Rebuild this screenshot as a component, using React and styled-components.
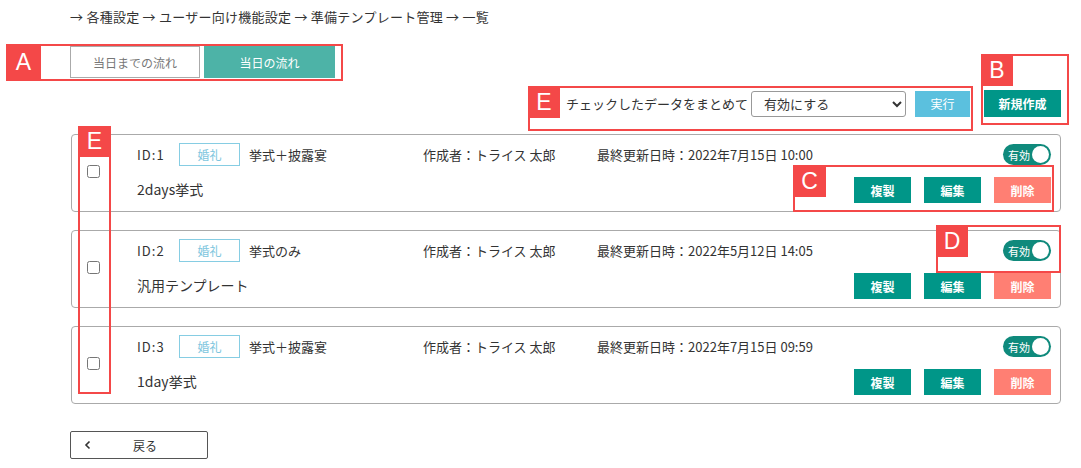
import React from "react";
import styled, { createGlobalStyle } from "styled-components";

const Global = createGlobalStyle`
  html, body { margin: 0; padding: 0; background: #fff; }
  body { font-family: "Noto Sans CJK JP", "Noto Sans", sans-serif; color: #333; }
  * { box-sizing: border-box; }
`;

const Page = styled.div`
  position: relative;
  width: 1081px;
  height: 468px;
  padding: 8px 20px 0 70px;
`;

const Breadcrumb = styled.div`
  font-size: 13px;
  line-height: 18px;
  letter-spacing: 0.25px;
  color: #333;
  white-space: nowrap;
`;

const Tabs = styled.div`
  display: flex;
  gap: 4px;
  margin-top: 20px;
`;

const Tab = styled.div`
  width: ${(p) => (p.$active ? 131 : 130)}px;
  height: 32px;
  display: flex;
  align-items: center;
  justify-content: center;
  font-size: 12px;
  color: ${(p) => (p.$active ? "#fff" : "#777")};
  background: ${(p) => (p.$active ? "#4db3a7" : "#fff")};
  border: 1px solid ${(p) => (p.$active ? "#4db3a7" : "#aaa")};
`;

const Toolbar = styled.div`
  display: flex;
  justify-content: flex-end;
  align-items: center;
  margin-top: 12px;
  height: 27px;
`;

const ToolLabel = styled.span`
  font-size: 13px;
  color: #333;
  margin-right: 3px;
`;

const Select = styled.select`
  width: 155px;
  height: 26px;
  font-family: inherit;
  font-size: 13px;
  color: #333;
  border: 1px solid #999;
  border-radius: 3px;
  padding: 0 6px 0 8px;
  background: #fff;
`;

const Btn = styled.button`
  width: ${(p) => p.$w || 57}px;
  height: ${(p) => p.$h || 26}px;
  margin-left: ${(p) => p.$ml || 0}px;
  border: none;
  border-radius: 0;
  font-family: inherit;
  font-size: 12px;
  font-weight: ${(p) => (p.$bold ? 700 : 400)};
  color: #fff;
  background: ${(p) => p.$bg};
  padding: 0;
  display: flex;
  align-items: center;
  justify-content: center;
`;

const CardList = styled.div`
  display: flex;
  flex-direction: column;
  gap: 18px;
  margin-top: 17px;
  margin-left: 1px;
  width: 990px;
`;

const Card = styled.div`
  display: flex;
  height: 78px;
  border: 1px solid #aaa;
  border-radius: 4px;
  padding: 8px 8px 8px 0;
`;

const CheckCol = styled.div`
  width: 65px;
  display: flex;
  align-items: center;
  padding-left: 15px;
  padding-bottom: 3px;
`;

const Check = styled.input`
  width: 13px;
  height: 13px;
  margin: 0;
`;

const Body = styled.div`
  flex: 1;
  display: flex;
  flex-direction: column;
  gap: 11px;
`;

const MetaRow = styled.div`
  display: flex;
  align-items: center;
  height: 23px;
  font-size: 13px;
  color: #333;
`;

const Cell = styled.span`
  width: ${(p) => p.$w}px;
  letter-spacing: ${(p) => p.$ls || 0}px;
  white-space: nowrap;
  flex-shrink: 0;
`;

const Tag = styled.span`
  width: 61px;
  height: 23px;
  margin-right: 9px;
  border: 1px solid #86cde3;
  color: #7ec6de;
  font-size: 12px;
  display: flex;
  align-items: center;
  justify-content: center;
  flex-shrink: 0;
`;

const Spacer = styled.div`
  flex: 1;
`;

const Toggle = styled.div`
  width: 48px;
  height: 21px;
  border-radius: 11px;
  background: #0f8a7c;
  display: flex;
  align-items: center;
  justify-content: space-between;
  padding: 0 2px 0 5px;
  margin-right: 1px;
  color: #fff;
  font-size: 11px;
`;

const Knob = styled.span`
  width: 17px;
  height: 17px;
  border-radius: 50%;
  background: #fff;
`;

const TitleRow = styled.div`
  display: flex;
  align-items: center;
  height: 26px;
`;

const Title = styled.div`
  flex: 1;
  font-size: 14px;
  color: #333;
  padding-bottom: 2px;
`;

const Actions = styled.div`
  display: flex;
  gap: 13px;
  margin-right: 1px;
`;

const Back = styled.button`
  margin-top: 27px;
  width: 138px;
  height: 28px;
  border: 1px solid #555;
  border-radius: 2px;
  background: #fff;
  display: grid;
  grid-template-columns: 1fr auto 1fr;
  align-items: center;
  padding: 0 0 0 12px;
  font-family: inherit;
  font-size: 12px;
  color: #333;
`;

const Chev = styled.svg`
  width: 10px;
  height: 10px;
`;

const Mark = styled.div`
  position: absolute;
  border: 2px solid #f44848;
  pointer-events: none;
`;

const MarkLabel = styled.span`
  position: absolute;
  left: -2px;
  top: -2px;
  width: ${(p) => p.$w}px;
  height: ${(p) => p.$h}px;
  background: #f44848;
  color: #fff;
  font-family: "Liberation Sans", Arial, sans-serif;
  font-size: 23px;
  display: flex;
  align-items: center;
  justify-content: center;
`;

const Annotation = ({ x, y, w, h, label, lw = 32, lh = 32 }) => (
  <Mark style={{ left: x, top: y, width: w, height: h }}>
    <MarkLabel $w={lw} $h={lh}>{label}</MarkLabel>
  </Mark>
);

const items = [
  { id: 1, cat: "挙式＋披露宴", date: "2022年7月15日 10:00", title: "2days挙式" },
  { id: 2, cat: "挙式のみ", date: "2022年5月12日 14:05", title: "汎用テンプレート" },
  { id: 3, cat: "挙式＋披露宴", date: "2022年7月15日 09:59", title: "1day挙式" },
];

export default function App() {
  return (
    <>
      <Global />
      <Page>
        <Breadcrumb>→ 各種設定 → ユーザー向け機能設定 → 準備テンプレート管理 → 一覧</Breadcrumb>
        <Tabs>
          <Tab>当日までの流れ</Tab>
          <Tab $active>当日の流れ</Tab>
        </Tabs>
        <Toolbar>
          <ToolLabel>チェックしたデータをまとめて</ToolLabel>
          <Select defaultValue="on">
            <option value="on">有効にする</option>
            <option value="off">無効にする</option>
          </Select>
          <Btn $w={55} $ml={9} $bg="#5bc0de">実行</Btn>
          <Btn $w={77} $h={27} $ml={14} $bg="#009688" $bold>新規作成</Btn>
        </Toolbar>
        <CardList>
          {items.map((it) => (
            <Card key={it.id}>
              <CheckCol>
                <Check type="checkbox" />
              </CheckCol>
              <Body>
                <MetaRow>
                  <Cell $w={42} $ls={1}>ID:{it.id}</Cell>
                  <Tag>婚礼</Tag>
                  <Cell $w={174}>{it.cat}</Cell>
                  <Cell $w={174}>作成者：トライス 太郎</Cell>
                  <Cell $w={300}>最終更新日時：{it.date}</Cell>
                  <Spacer />
                  <Toggle>
                    有効
                    <Knob />
                  </Toggle>
                </MetaRow>
                <TitleRow>
                  <Title>{it.title}</Title>
                  <Actions>
                    <Btn $bg="#009688" $bold>複製</Btn>
                    <Btn $bg="#009688" $bold>編集</Btn>
                    <Btn $bg="#ff7f73" $bold>削除</Btn>
                  </Actions>
                </TitleRow>
              </Body>
            </Card>
          ))}
        </CardList>
        <Back>
          <Chev viewBox="0 0 10 10">
            <path d="M6.5 1.5 L3 5 L6.5 8.5" fill="none" stroke="#333" strokeWidth="1.6" />
          </Chev>
          <span>戻る</span>
          <span />
        </Back>

        <Annotation x={6} y={44} w={337} h={37} label="A" lw={35} lh={37} />
        <Annotation x={981} y={54} w={88} h={71} label="B" />
        <Annotation x={528} y={86} w={445} h={45} label="E" />
        <Annotation x={78} y={126} w={33} h={268} label="E" lw={33} lh={31} />
        <Annotation x={793} y={165} w={261} h={47} label="C" lw={33} />
        <Annotation x={936} y={225} w={125} h={48} label="D" />
      </Page>
    </>
  );
}
